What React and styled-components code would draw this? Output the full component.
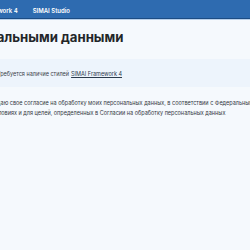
import React from "react";
import styled, { createGlobalStyle } from "styled-components";

const GlobalStyle = createGlobalStyle`
  html, body {
    margin: 0;
    padding: 0;
    background: #f5f9fd;
    overflow: hidden;
  }
  body {
    font-family: Inter, "Noto Sans", "Liberation Sans", sans-serif;
  }
`;

function App() {
  return (
    <>
      <GlobalStyle />
      <Viewport>
        {/* the shot is scrolled to the right, the left part is out of view */}
        <Page>
          <Header>
            <Brand />
            <Nav>
              <NavLink>SIMAI Framework 4</NavLink>
              <NavLink>SIMAI Studio</NavLink>
            </Nav>
          </Header>
          <Content>
            <Title>Работа с персональными данными</Title>
            <Alert>
              Требуется наличие стилей <AlertLink>SIMAI Framework 4</AlertLink>
            </Alert>
            <Consent>
              <Box type="checkbox" />
              <ConsentText>
                Я даю свое согласие на обработку моих персональных данных, в
                соответствии с Федеральным законом от 27.07.2006 года №152-ФЗ, на
                <br />
                условиях и для целей, определенных в Согласии на обработку
                персональных данных
              </ConsentText>
            </Consent>
          </Content>
        </Page>
      </Viewport>
    </>
  );
}

const Viewport = styled.div`
  width: 250px;
  height: 250px;
  overflow: hidden;
`;

const Page = styled.div`
  width: 1200px;
  margin-left: -112px;
`;

const Header = styled.header`
  height: 18px;
  background: #2e6bb0;
  border-bottom: 1px solid #1c4c84;
  box-shadow: 0 1px 0 #b9d0ea;
  display: flex;
  align-items: center;
  gap: 15px;
`;

const Brand = styled.div`
  width: 58px;
  height: 10px;
`;

const Nav = styled.nav`
  display: flex;
  align-items: center;
  gap: 15px;
  padding-top: 2px;
`;

const NavLink = styled.a`
  color: #ffffff;
  font-size: 6px;
  font-weight: 600;
  white-space: nowrap;
`;

const Content = styled.main`
  padding-top: 8px;
`;

const Title = styled.h1`
  margin: 0;
  font-size: 13.2px;
  line-height: 20px;
  font-weight: 700;
  color: #232629;
  white-space: nowrap;
`;

const Alert = styled.div`
  margin-top: 12px;
  height: 28px;
  padding-left: 109px;
  display: flex;
  align-items: center;
  background: #edf4fc;
  font-size: 5.5px;
  color: #3b4148;
  white-space: nowrap;
  padding-top: 2px;
  box-sizing: border-box;
`;

const AlertLink = styled.a`
  color: #2b3a4c;
  text-decoration: underline;
  margin-left: 2px;
`;

const Consent = styled.label`
  margin-top: 11px;
  padding-left: 82px;
  display: flex;
  align-items: flex-start;
  gap: 8px;
`;

const Box = styled.input`
  margin: 0;
  width: 14px;
  height: 14px;
`;

const ConsentText = styled.span`
  font-size: 5.5px;
  line-height: 10px;
  color: #33383e;
  white-space: nowrap;
`;

export default App;
